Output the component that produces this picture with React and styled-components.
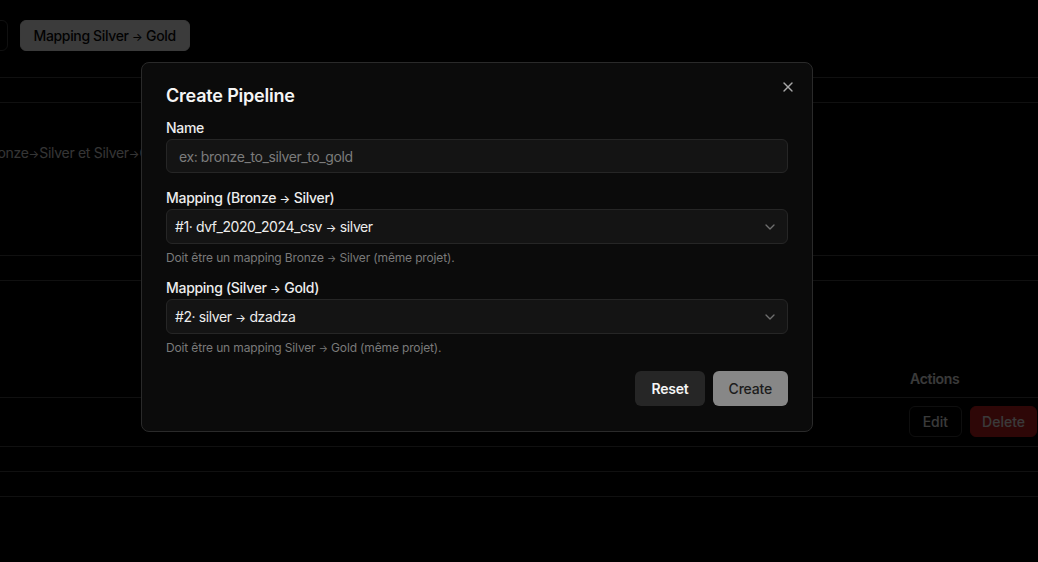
import React from "react";
import styled, { createGlobalStyle } from "styled-components";
import { X, ChevronDown } from "lucide-react";

const GlobalStyle = createGlobalStyle`
    html, body {
        margin: 0;
        padding: 0;
        background: #000;
        overflow: hidden;
        font-family: Inter, "Noto Sans", "Liberation Sans", sans-serif;
    }
`;

// small thin arrow like the one in the app's font
const A = () => <Arrow>→</Arrow>;

const App = () => {
    return (
        <>
            <GlobalStyle />
            <Page>
                <Row $height={78}>
                    <Toolbar>
                        <TabButton>Mapping Bronze <A /> Silver</TabButton>
                        <TabButton $active>Mapping Silver <A /> Gold</TabButton>
                    </Toolbar>
                </Row>
                <Row $height={25} />
                <Row $height={153}>
                    <Description>
                        Chaîne les mappings Bronze<A />Silver et Silver<A />Gold d'un même projet.
                    </Description>
                </Row>
                <Row $height={25} />
                <Row $height={117}>
                    <TableHead>
                        <HeadCell>Actions</HeadCell>
                    </TableHead>
                </Row>
                <Row $height={49}>
                    <ActionsCell>
                        <RowButton>Edit</RowButton>
                        <RowButton $danger>Delete</RowButton>
                    </ActionsCell>
                </Row>
                <Row $height={25} />
                <Row $height={25} />
            </Page>

            <Overlay>
                <Modal>
                    <CloseButton aria-label="Close">
                        <X size={16} strokeWidth={2} />
                    </CloseButton>
                    <Title>Create Pipeline</Title>

                    <Field>
                        <Label>Name</Label>
                        <Input placeholder="ex: bronze_to_silver_to_gold" />
                    </Field>

                    <Field $gap={15}>
                        <Label>Mapping (Bronze <A /> Silver)</Label>
                        <Select>
                            <span>#1· dvf_2020_2024_csv <A /> silver</span>
                            <ChevronDown size={16} color="#6f6f6f" />
                        </Select>
                        <Hint>Doit être un mapping Bronze <A /> Silver (même projet).</Hint>
                    </Field>

                    <Field $gap={12}>
                        <Label>Mapping (Silver <A /> Gold)</Label>
                        <Select>
                            <span>#2· silver <A /> dzadza</span>
                            <ChevronDown size={16} color="#6f6f6f" />
                        </Select>
                        <Hint>Doit être un mapping Silver <A /> Gold (même projet).</Hint>
                    </Field>

                    <Footer>
                        <Button>Reset</Button>
                        <Button $primary>Create</Button>
                    </Footer>
                </Modal>
            </Overlay>
        </>
    );
};

export default App;

const Arrow = styled.span`
    font-size: 0.8em;
    line-height: 0;
    letter-spacing: 0;
`;

const Page = styled.div`
    display: flex;
    flex-direction: column;
    width: 100vw;
    height: 100vh;
    overflow: hidden;
    color: #e5e5e5;
    font-size: 14px;
    letter-spacing: -0.3px;
`;

const Row = styled.div`
    height: ${(p) => p.$height - 1}px;
    flex-shrink: 0;
    border-bottom: 1px solid #404040;
    display: flex;
    overflow: hidden;
`;

const Toolbar = styled.div`
    display: flex;
    gap: 12px;
    padding-top: 20px;
    margin-left: -178px;
    align-items: flex-start;
`;

const TabButton = styled.button`
    height: 31px;
    padding: 0 13px;
    border-radius: 6px;
    font-family: inherit;
    font-size: 14px;
    font-weight: 500;
    letter-spacing: -0.35px;
    white-space: nowrap;
    border: 1px solid ${(p) => (p.$active ? "#e5e5e5" : "#404040")};
    background: ${(p) => (p.$active ? "#ececec" : "transparent")};
    color: ${(p) => (p.$active ? "#0a0a0a" : "#e5e5e5")};
`;

const Description = styled.p`
    margin: 40px 0 0 -152px;
    line-height: 20px;
    white-space: nowrap;
    color: #d4d4d4;
`;

const TableHead = styled.div`
    display: flex;
    justify-content: flex-end;
    align-items: flex-end;
    width: 100%;
    padding-bottom: 8px;
`;

const HeadCell = styled.div`
    width: 128px;
    font-weight: 600;
    line-height: 20px;
    color: #e5e5e5;
`;

const ActionsCell = styled.div`
    display: flex;
    justify-content: flex-end;
    gap: 8px;
    width: 100%;
    padding: 8px 1px 0 0;
    box-sizing: border-box;
`;

const RowButton = styled.button`
    height: 31px;
    padding: 0 ${(p) => (p.$danger ? 11 : 13)}px;
    border-radius: 6px;
    font-family: inherit;
    font-size: 14px;
    font-weight: 500;
    border: 1px solid ${(p) => (p.$danger ? "#b91c1c" : "#3a3a3a")};
    background: ${(p) => (p.$danger ? "#b91c1c" : "transparent")};
    color: #e5e5e5;
`;

const Overlay = styled.div`
    position: fixed;
    inset: 0;
    background: rgba(0, 0, 0, 0.75);
    display: flex;
    align-items: flex-start;
    padding: 62px 0 0 141px;
`;

const Modal = styled.div`
    position: relative;
    width: 672px;
    box-sizing: border-box;
    padding: 20px 24px 25px;
    background: #0b0b0b;
    border: 1px solid #2a2a2a;
    border-radius: 8px;
    display: flex;
    flex-direction: column;
    color: #f5f5f5;
    letter-spacing: -0.3px;
`;

const CloseButton = styled.button`
    position: absolute;
    top: 16px;
    right: 16px;
    width: 16px;
    height: 16px;
    padding: 0;
    border: none;
    background: none;
    color: #a8a8a8;
    display: flex;
`;

const Title = styled.h2`
    margin: 0;
    font-size: 18px;
    line-height: 26px;
    font-weight: 600;
    letter-spacing: -0.2px;
`;

const Field = styled.div`
    display: flex;
    flex-direction: column;
    margin-top: ${(p) => p.$gap || 9}px;
`;

const Label = styled.label`
    font-size: 14px;
    line-height: 20px;
    font-weight: 500;
    color: #ededed;
    margin-bottom: 1px;
`;

const Input = styled.input`
    height: 34px;
    box-sizing: border-box;
    padding: 0 12px;
    border: 1px solid #262626;
    border-radius: 6px;
    background: #141414;
    font-family: inherit;
    font-size: 14px;
    letter-spacing: -0.4px;
    color: #ededed;
    outline: none;

    &::placeholder {
        color: #7c7c7c;
    }
`;

const Select = styled.div`
    height: 35px;
    box-sizing: border-box;
    padding: 0 9px 0 8px;
    border: 1px solid #262626;
    border-radius: 6px;
    background: #141414;
    display: flex;
    align-items: center;
    justify-content: space-between;
    font-size: 14px;
    letter-spacing: -0.4px;
    color: #ededed;
`;

const Hint = styled.p`
    margin: 6px 0 0;
    font-size: 12px;
    line-height: 16px;
    letter-spacing: -0.15px;
    color: #7a7a7a;
`;

const Footer = styled.div`
    display: flex;
    justify-content: flex-end;
    gap: 8px;
    margin-top: 15px;
`;

const Button = styled.button`
    height: 35px;
    padding: 0 16px;
    border: none;
    border-radius: 6px;
    font-family: inherit;
    font-size: 14px;
    letter-spacing: -0.2px;
    font-weight: ${(p) => (p.$primary ? 500 : 600)};
    background: ${(p) => (p.$primary ? "#878787" : "#262626")};
    color: ${(p) => (p.$primary ? "#1c1c1c" : "#f5f5f5")};
`;
